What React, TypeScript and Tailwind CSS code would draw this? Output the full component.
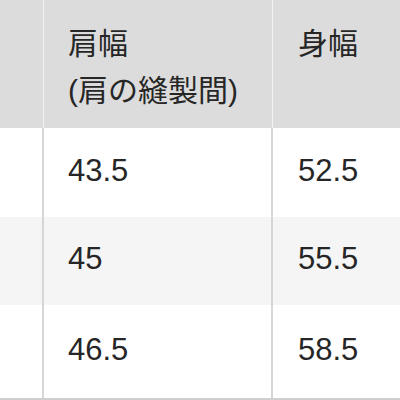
const rows = [
  { shoulder: '43.5', body: '52.5' },
  { shoulder: '45', body: '55.5' },
  { shoulder: '46.5', body: '58.5' },
];

export default function App() {
  return (
    <div
      className="w-[400px] h-[400px] overflow-hidden bg-white text-[#262626]"
      style={{ fontFamily: '"Liberation Sans", "Noto Sans CJK JP", sans-serif' }}
    >
      {/* ヘッダー */}
      <div className="flex h-[128px] bg-[#dcdcdc] text-[30px] leading-[47px]">
        <div className="w-[43px] shrink-0" />
        <div className="w-[1px] shrink-0 bg-[#f2f2f2]" />
        <div className="w-[228px] shrink-0 pl-[24px] pt-[20px]">
          <p>肩幅</p>
          <p>(肩の縫製間)</p>
        </div>
        <div className="w-[1px] shrink-0 bg-[#f2f2f2]" />
        <div className="flex-1 pl-[25px] pt-[20px]">
          <p>身幅</p>
        </div>
      </div>

      {/* 本体 */}
      {rows.map((row, i) => (
        <div
          key={i}
          className={`flex text-[31px] ${
            i === 0 ? 'h-[89px] bg-white' : i === 1 ? 'h-[88px] bg-[#f5f5f5]' : 'h-[93px] bg-white'
          }`}
        >
          <div className="w-[42px] shrink-0" />
          <div className="w-[2px] shrink-0 bg-[#d6d6d6]" />
          <div className="w-[227px] shrink-0 pl-[24px] pb-[3px] flex items-center">{row.shoulder}</div>
          <div className="w-[2px] shrink-0 bg-[#d6d6d6]" />
          <div className="flex-1 pl-[25px] pb-[3px] flex items-center">{row.body}</div>
        </div>
      ))}
      <div className="h-[2px] bg-[#cfcfcf]" />
    </div>
  );
}
